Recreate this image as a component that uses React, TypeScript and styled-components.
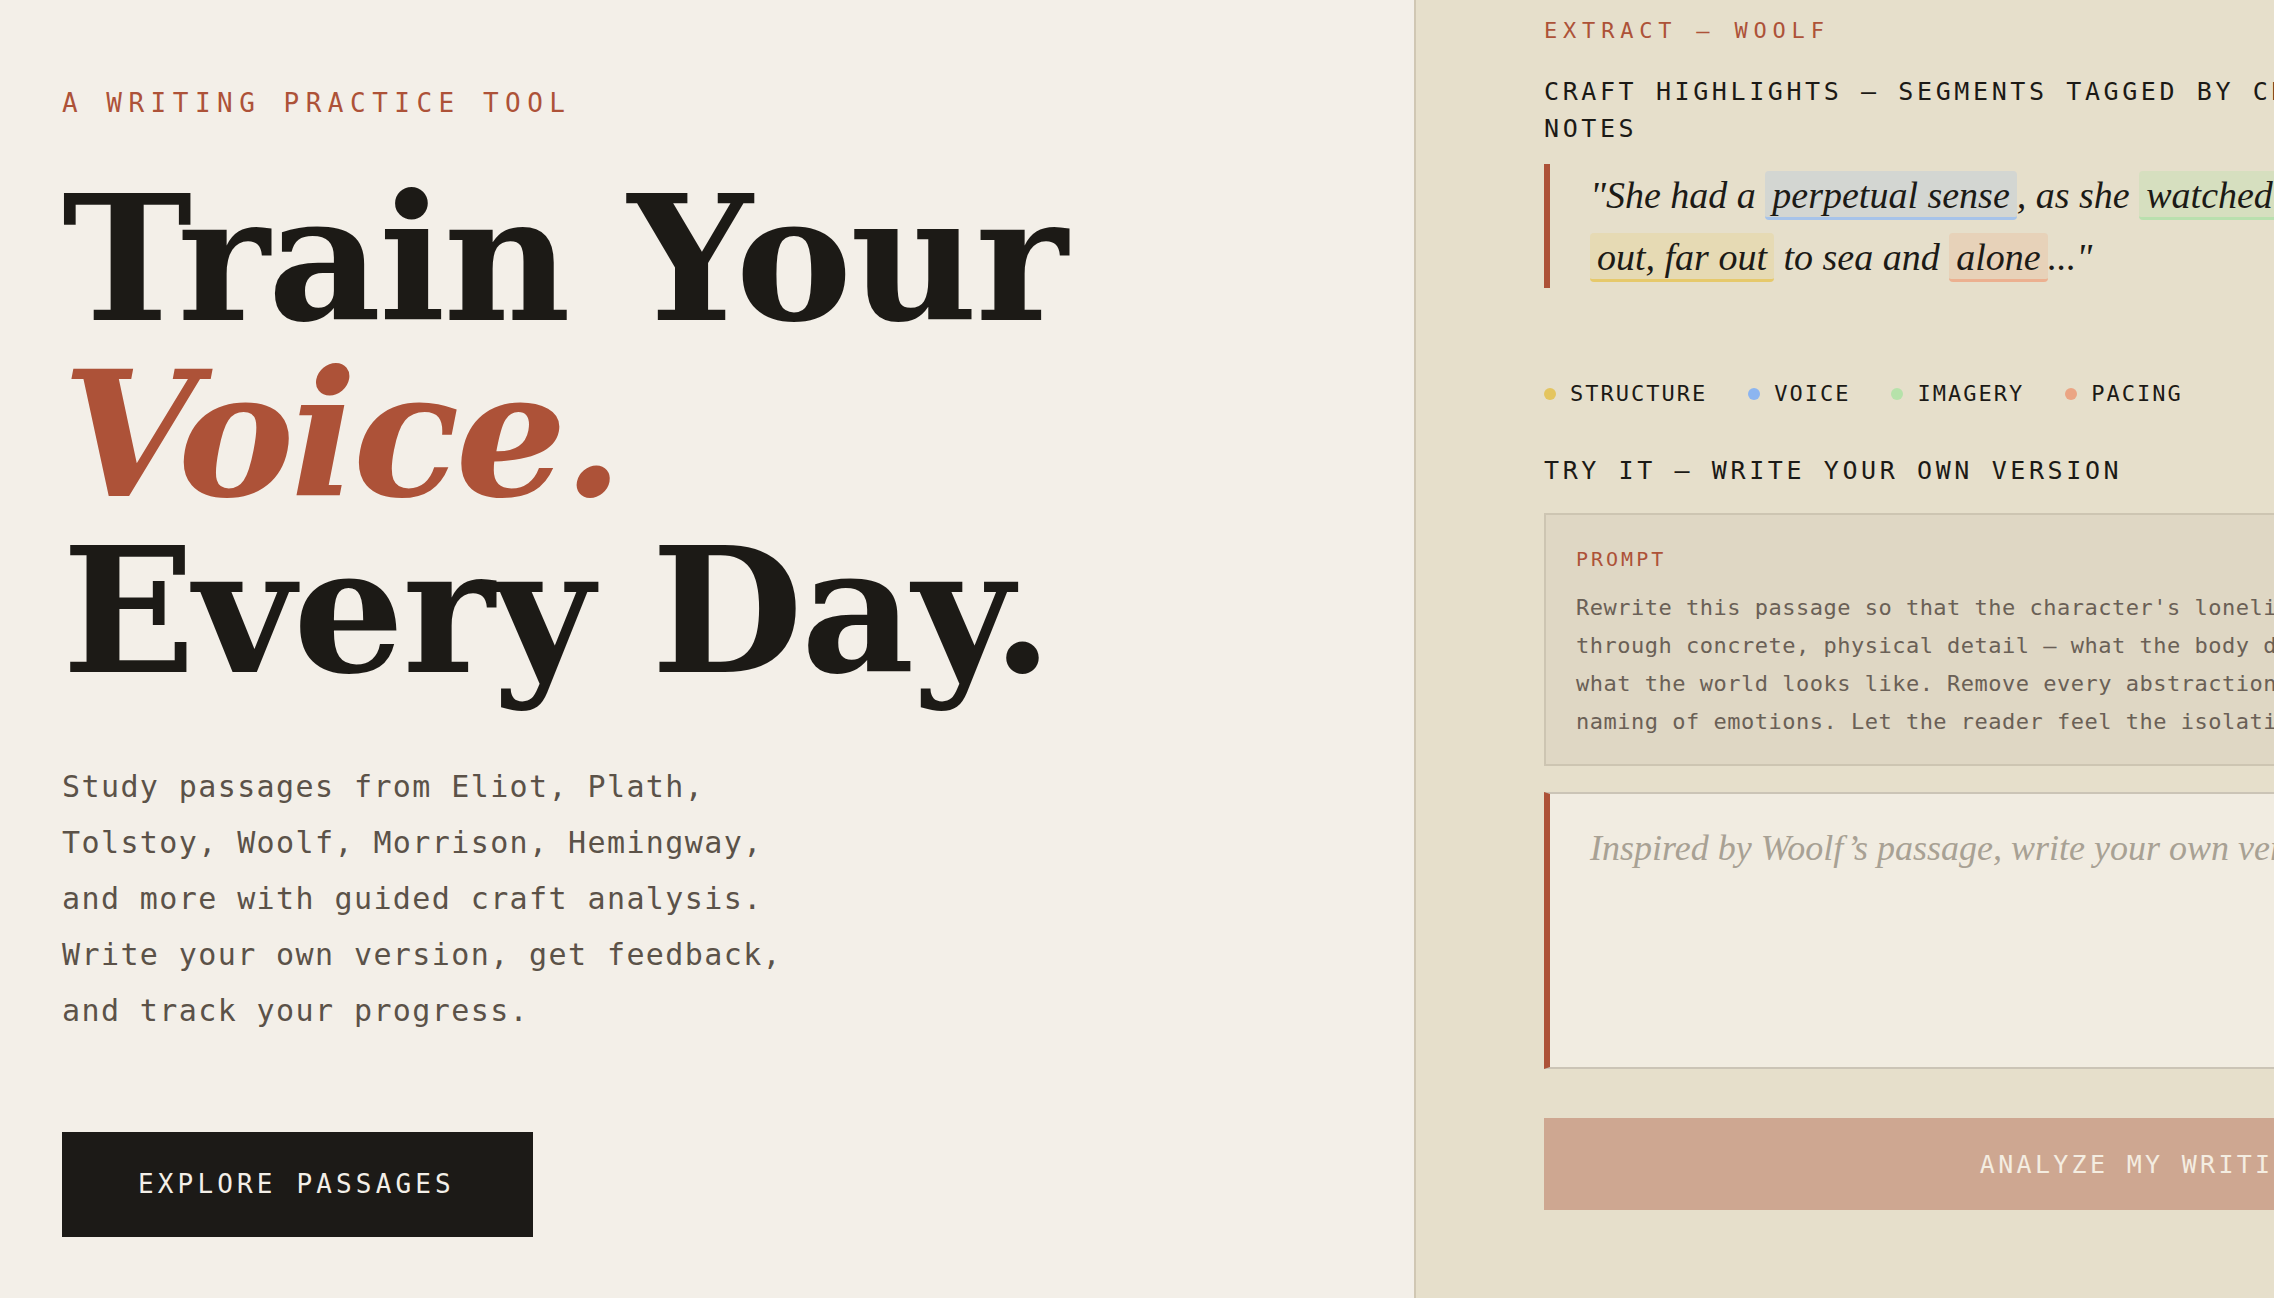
import React from "react";
import styled, { createGlobalStyle } from "styled-components";

const MONO = `"DejaVu Sans Mono", "Liberation Mono", monospace`;
const SERIF = `"Liberation Serif", "DejaVu Serif", serif`;
const DISPLAY = `"DejaVu Serif", "Liberation Serif", serif`;
const RUST = "#ad5238";
const INK = "#1c1a16";

const GlobalStyle = createGlobalStyle`
  html, body {
    margin: 0;
    padding: 0;
    background: #f3efe8;
    overflow: hidden;
  }
  *, *::before, *::after { box-sizing: border-box; }
`;

const Page = styled.div`
  display: grid;
  grid-template-columns: 1414px 1461px;
  min-height: 100vh;
  width: 2875px;
`;

const Hero = styled.section`
  background: #f3efe8;
  padding: 90px 0 0 62px;
  display: flex;
  flex-direction: column;
  align-items: flex-start;
`;

const Eyebrow = styled.div`
  font-family: ${MONO};
  font-size: 26px;
  line-height: 26px;
  letter-spacing: 6.5px;
  color: ${RUST};
  text-transform: uppercase;
`;

const Headline = styled.h1`
  margin: 55px 0 0;
  font-family: ${DISPLAY};
  font-weight: 700;
  font-size: 175px;
  line-height: 176px;
  letter-spacing: -2px;
  color: ${INK};
`;

const HeadLine = styled.span<{ $accent?: boolean }>`
  display: block;
  white-space: nowrap;
  color: ${(p) => (p.$accent ? RUST : INK)};
  font-style: ${(p) => (p.$accent ? "italic" : "normal")};
  letter-spacing: ${(p) => (p.$accent ? "-4px" : "inherit")};
`;

const Lede = styled.p`
  margin: 60px 0 0;
  max-width: 745px;
  font-family: ${MONO};
  font-size: 30px;
  line-height: 56px;
  letter-spacing: 1.4px;
  color: #5b5248;
`;

const PrimaryButton = styled.button`
  margin-top: 93px;
  padding: 39px 78px 40px 76px;
  background: #1c1a17;
  color: #f3efe8;
  border: none;
  font-family: ${MONO};
  font-size: 26px;
  line-height: 26px;
  letter-spacing: 4.15px;
  cursor: pointer;
`;

const Panel = styled.aside`
  background: #e6dfcb;
  border-left: 2px solid #d0c7b3;
  padding: 20px 129px 0 128px;
  display: flex;
  flex-direction: column;
`;

const PanelLabel = styled.div`
  font-family: ${MONO};
  font-size: 22px;
  line-height: 22px;
  letter-spacing: 5.8px;
  color: ${RUST};
`;

const SectionTitle = styled.h2<{ $gap: number }>`
  margin: ${(p) => p.$gap}px 0 0;
  font-family: ${MONO};
  font-weight: 400;
  font-size: 25px;
  line-height: 37px;
  letter-spacing: 3.6px;
  color: ${INK};
`;

const Quote = styled.blockquote`
  margin: 17px 0 0;
  border-left: 6px solid ${RUST};
  padding: 0 0 0 40px;
  font-family: ${SERIF};
  font-style: italic;
  font-size: 38px;
  line-height: 62px;
  color: ${INK};
`;

const tones = {
  voice: { bg: "rgba(160, 190, 230, 0.28)", line: "#a6c3ea" },
  imagery: { bg: "rgba(180, 225, 165, 0.3)", line: "#b9e0ae" },
  structure: { bg: "rgba(232, 200, 100, 0.22)", line: "#e6c96b" },
  pacing: { bg: "rgba(236, 170, 130, 0.25)", line: "#ecb090" },
};

type Tone = keyof typeof tones;

const Mark = styled.span<{ $tone: Tone }>`
  display: inline-block;
  padding: 2px 7px 0;
  line-height: 44px;
  border-radius: 4px;
  background: ${(p) => tones[p.$tone].bg};
  border-bottom: 3px solid ${(p) => tones[p.$tone].line};
`;

const Legend = styled.div`
  margin-top: 95px;
  display: flex;
  align-items: center;
  gap: 41px;
`;

const LegendItem = styled.div`
  display: flex;
  align-items: center;
  gap: 14px;
  font-family: ${MONO};
  font-size: 22px;
  line-height: 22px;
  letter-spacing: 2px;
  color: ${INK};
`;

const Dot = styled.span<{ $color: string }>`
  width: 12px;
  height: 12px;
  border-radius: 50%;
  background: ${(p) => p.$color};
  flex: none;
`;

const PromptCard = styled.div`
  margin-top: 24px;
  border: 2px solid #cdc5b2;
  background: #dfd7c4;
  padding: 34px 30px 23px;
`;

const PromptLabel = styled.div`
  font-family: ${MONO};
  font-size: 20px;
  line-height: 20px;
  letter-spacing: 3px;
  color: ${RUST};
`;

const PromptText = styled.p`
  margin: 20px 0 0;
  font-family: ${MONO};
  font-size: 22px;
  line-height: 38px;
  letter-spacing: 0.5px;
  color: #6a6056;
`;

const Editor = styled.textarea`
  display: block;
  margin-top: 26px;
  width: 100%;
  height: 277px;
  resize: none;
  border: 2px solid #cbc4b6;
  border-left: 6px solid ${RUST};
  border-radius: 0;
  background: #f1ece1;
  padding: 24px 40px;
  font-family: ${SERIF};
  font-style: italic;
  font-size: 36px;
  line-height: 61px;
  color: ${INK};
  outline: none;
  &::placeholder {
    color: #a8a194;
  }
`;

const AnalyzeButton = styled.button`
  margin-top: 49px;
  width: 100%;
  height: 92px;
  border: none;
  background: #cea791;
  color: #f4ede1;
  font-family: ${MONO};
  font-size: 25px;
  letter-spacing: 3.3px;
  cursor: not-allowed;
`;

const legend: { label: string; color: string }[] = [
  { label: "STRUCTURE", color: "#e4c55f" },
  { label: "VOICE", color: "#8cb5f0" },
  { label: "IMAGERY", color: "#b6e2aa" },
  { label: "PACING", color: "#eba584" },
];

export default function App() {
  return (
    <>
      <GlobalStyle />
      <Page>
        <Hero>
          <Eyebrow>A Writing Practice Tool</Eyebrow>
          <Headline>
            <HeadLine>Train Your</HeadLine>
            <HeadLine $accent>Voice.</HeadLine>
            <HeadLine>Every Day.</HeadLine>
          </Headline>
          <Lede>
            Study passages from Eliot, Plath, Tolstoy, Woolf, Morrison, Hemingway,
            and more with guided craft analysis. Write your own version, get
            feedback, and track your progress.
          </Lede>
          <PrimaryButton>EXPLORE PASSAGES</PrimaryButton>
        </Hero>
        <Panel>
          <PanelLabel>EXTRACT — WOOLF</PanelLabel>
          <SectionTitle $gap={31}>
            CRAFT HIGHLIGHTS — SEGMENTS TAGGED BY CRAFT ELEMENT, HOVER FOR NOTES
          </SectionTitle>
          <Quote>
            "She had a <Mark $tone="voice">perpetual sense</Mark>, as she{" "}
            <Mark $tone="imagery">watched the taxi cabs</Mark>, of being out,
            <br />
            <Mark $tone="structure">out, far out</Mark> to sea and{" "}
            <Mark $tone="pacing">alone</Mark>..."
          </Quote>
          <Legend>
            {legend.map((item) => (
              <LegendItem key={item.label}>
                <Dot $color={item.color} />
                {item.label}
              </LegendItem>
            ))}
          </Legend>
          <SectionTitle $gap={47}>TRY IT — WRITE YOUR OWN VERSION</SectionTitle>
          <PromptCard>
            <PromptLabel>PROMPT</PromptLabel>
            <PromptText>
              Rewrite this passage so that the character's loneliness is expressed
              entirely through concrete, physical detail — what the body does, what
              the hands reach for, what the world looks like. Remove every
              abstraction, every label, every direct naming of emotions. Let the
              reader feel the isolation without being told about it.
            </PromptText>
          </PromptCard>
          <Editor placeholder="Inspired by Woolf’s passage, write your own version here..." />
          <AnalyzeButton disabled>ANALYZE MY WRITING</AnalyzeButton>
        </Panel>
      </Page>
    </>
  );
}
